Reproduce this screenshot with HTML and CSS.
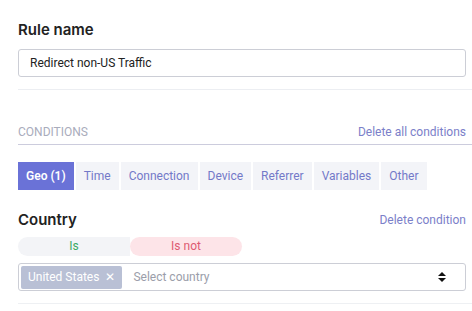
FILE: index.html
```html
<!DOCTYPE html>
<html lang="en">
<head>
<meta charset="UTF-8">
<title>Rule editor</title>
<link rel="stylesheet" href="styles.css">
</head>
<body>

<div class="rule">

<section class="name-block">
<h3>Rule name</h3>
<input class="text-input" value="Redirect non-US Traffic">
</section>

<section class="conditions">
<div class="cond-head">
<span class="label">CONDITIONS</span>
<a class="link">Delete all conditions</a>
</div>

<div class="tabs">
<span class="tab active">Geo (1)</span>
<span class="tab">Time</span>
<span class="tab">Connection</span>
<span class="tab">Device</span>
<span class="tab">Referrer</span>
<span class="tab">Variables</span>
<span class="tab">Other</span>
</div>

<div class="cond-row">
<h3>Country</h3>
<a class="link">Delete condition</a>
</div>

<div class="toggle">
<span class="opt is">Is</span>
<span class="opt not">Is not</span>
</div>

<div class="select">
<span class="chip">United States <span class="x">✕</span></span>
<span class="placeholder">Select country</span>
<svg class="arrows" width="10" height="14" viewBox="0 0 10 14"><path d="M1 6 L5 2 L9 6 Z M1 8 L5 12 L9 8 Z" fill="#111"/></svg>
</div>
</section>

</div>

</body>
</html>
```

FILE: styles.css
```css
body{margin:0;font-family:Roboto,"Liberation Sans",sans-serif;background:#fff;color:#222}
.rule{padding:0 0 0 18px}
h3{margin:0;font-size:15px;font-weight:600;color:#222;font-family:Inter,Roboto,sans-serif;line-height:18px}
.name-block{padding:21px 0 12px;border-bottom:1px solid #eceef2}
.name-block h3{margin-bottom:10px}
.text-input{box-sizing:border-box;width:448px;height:28px;border:1px solid #ccced6;border-radius:3px;padding:0 11px;font:12px Roboto,sans-serif;color:#222;display:block}
.conditions{padding-top:35px;border-bottom:1px solid #eef0f3;padding-bottom:12px}
.cond-head{display:flex;justify-content:space-between;align-items:center;border-bottom:1px solid #ccd;padding:0 6px 5px 0;font-size:12px;line-height:14px}
.label{color:#a9acbc}
.link{color:#7b80c9;font-size:12px}
.tabs{display:flex;gap:2px;margin-top:17px}
.tab{background:#f3f4f8;color:#7379c8;font-size:12px;height:28px;line-height:28px;padding:0 8px}
.tab.active{background:#6a72d7;color:#fff;font-weight:600;padding:0 8px}
.cond-row{display:flex;justify-content:space-between;align-items:center;padding-right:6px;margin-top:21px}
.toggle{display:flex;margin-top:8px;width:224px}
.opt{flex:1;height:19px;line-height:19px;text-align:center;font-size:12px;border-radius:10px}
.is{background:#f3f4f7;color:#3caa64;border-radius:10px 0 0 10px}
.not{background:#fde4e8;color:#de5a72}
.select{box-sizing:border-box;width:448px;height:28px;margin-top:7px;border:1px solid #ccced6;border-radius:3px;display:flex;align-items:center;padding:0 18px 0 2px;font-size:12px}
.chip{background:#b9c0d5;color:#fff;height:23px;line-height:23px;padding:0 7px;border-radius:2px}
.x{margin-left:3px}
.placeholder{color:#9b9eaa;margin-left:11px;flex:1}
```
